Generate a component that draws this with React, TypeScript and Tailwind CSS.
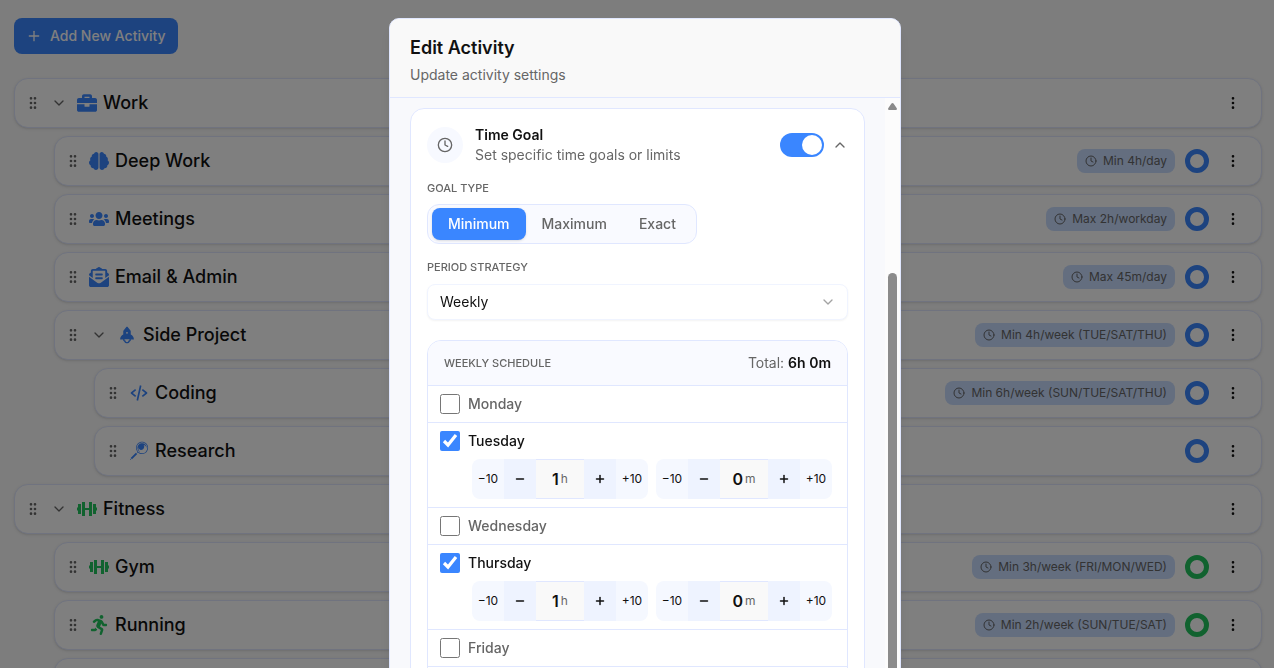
import { useState } from "react";
import type { ComponentType } from "react";
import { AiFillRocket } from "react-icons/ai";
import { BiCodeAlt } from "react-icons/bi";
import { FaBrain, FaBriefcase, FaEnvelopeOpenText, FaRunning, FaUsers } from "react-icons/fa";
import { GiMagnifyingGlass } from "react-icons/gi";
import { ChevronDown, ChevronUp, Clock, EllipsisVertical, GripVertical, Minus, Plus } from "lucide-react";

type Activity = {
  name: string;
  icon?: ComponentType<{ className?: string }>;
  level: number;
  color: "blue" | "green";
  group?: boolean;
  ring?: boolean;
  goal?: string;
};

const Barbell = ({ className }: { className?: string }) => (
  <svg viewBox="0 0 20 20" fill="currentColor" className={className}>
    <path d="M0 8.5h1V5h3v10H1v-3.5H0zM5 3h3v6h4V3h3v14h-3v-6H8v6H5zM16 5h3v3.5h1v3h-1V15h-3z" />
  </svg>
);

const activities: Activity[] = [
  { name: "Work", icon: FaBriefcase, level: 0, color: "blue", group: true },
  { name: "Deep Work", icon: FaBrain, level: 1, color: "blue", ring: true, goal: "Min 4h/day" },
  { name: "Meetings", icon: FaUsers, level: 1, color: "blue", ring: true, goal: "Max 2h/workday" },
  { name: "Email & Admin", icon: FaEnvelopeOpenText, level: 1, color: "blue", ring: true, goal: "Max 45m/day" },
  { name: "Side Project", icon: AiFillRocket, level: 1, color: "blue", group: true, ring: true, goal: "Min 4h/week (TUE/SAT/THU)" },
  { name: "Coding", icon: BiCodeAlt, level: 2, color: "blue", ring: true, goal: "Min 6h/week (SUN/TUE/SAT/THU)" },
  { name: "Research", icon: GiMagnifyingGlass, level: 2, color: "blue", ring: true },
  { name: "Fitness", icon: Barbell, level: 0, color: "green", group: true },
  { name: "Gym", icon: Barbell, level: 1, color: "green", ring: true, goal: "Min 3h/week (FRI/MON/WED)" },
  { name: "Running", icon: FaRunning, level: 1, color: "green", ring: true, goal: "Min 2h/week (SUN/TUE/SAT)" },
  { name: "", level: 1, color: "green" },
];

const indents = ["", "ml-10", "ml-20"];

const iconColors = {
  blue: "text-[#3a86ff]",
  green: "text-[#22c55e]",
};

const ringColors = {
  blue: "border-[#3a86ff]",
  green: "border-[#22c55e]",
};

const goalTypes = ["Minimum", "Maximum", "Exact"];

const schedule = [
  { day: "Monday", hours: 0, minutes: 0, active: false },
  { day: "Tuesday", hours: 1, minutes: 0, active: true },
  { day: "Wednesday", hours: 0, minutes: 0, active: false },
  { day: "Thursday", hours: 1, minutes: 0, active: true },
  { day: "Friday", hours: 0, minutes: 0, active: false },
];

const ActivityRow = ({ activity }: { activity: Activity }) => {
  const Icon = activity.icon;
  return (
    <li
      className={`flex h-[50px] items-center gap-2 rounded-[14px] border border-[#e0e7ff] bg-white pl-[10px] pr-[14px] shadow-sm ${indents[activity.level]}`}
    >
      <GripVertical className="size-4 shrink-0 text-[#666666]" />
      {activity.group && (
        <button type="button" aria-label={`Collapse ${activity.name}`} className="p-0.5 text-[#666666]">
          <ChevronDown className="size-4" />
        </button>
      )}
      <div className="flex flex-1 items-center gap-1.5">
        {Icon && <Icon className={`size-5 shrink-0 ${iconColors[activity.color]}`} />}
        <span className="text-lg font-medium text-[#111111]">{activity.name}</span>
      </div>
      {activity.goal && (
        <span className="flex h-6 items-center gap-1.5 rounded-lg bg-[#c8dcff] px-2 text-xs text-[#666666]">
          <Clock className="size-3" />
          {activity.goal}
        </span>
      )}
      {activity.ring && (
        <span className="flex w-7 justify-center">
          <span className={`size-6 rounded-full border-[5px] ${ringColors[activity.color]}`} />
        </span>
      )}
      <button type="button" aria-label="Activity menu" className="flex size-7 items-center justify-center text-[#111111]">
        <EllipsisVertical className="size-4" />
      </button>
    </li>
  );
};

const Stepper = ({ value, unit }: { value: number; unit: string }) => {
  const [amount, setAmount] = useState(value);
  const change = (step: number) => setAmount(Math.max(0, amount + step));

  return (
    <div className="flex h-10 overflow-hidden rounded-lg text-[#111111]">
      <button type="button" onClick={() => change(-10)} className="w-8 bg-[#f5f8ff] text-xs">
        −10
      </button>
      <button type="button" aria-label="Decrease" onClick={() => change(-1)} className="flex w-8 items-center justify-center bg-[#eef3ff]">
        <Minus className="size-3" strokeWidth={3} />
      </button>
      <div className="flex w-12 items-center justify-center gap-0.5 border-y border-[#e0e7ff] bg-[#f9f9f9]">
        <span className="font-semibold">{amount}</span>
        <span className="text-xs text-[#666666]">{unit}</span>
      </div>
      <button type="button" aria-label="Increase" onClick={() => change(1)} className="flex w-8 items-center justify-center bg-[#eef3ff]">
        <Plus className="size-3" strokeWidth={3} />
      </button>
      <button type="button" onClick={() => change(10)} className="w-8 bg-[#f5f8ff] text-xs">
        +10
      </button>
    </div>
  );
};

const WeeklySchedule = () => {
  const [days, setDays] = useState(schedule);

  const toggle = (day: string) =>
    setDays(days.map((d) => (d.day === day ? { ...d, active: !d.active } : d)));

  return (
    <div className="mt-5 overflow-hidden rounded-[14px] border border-[#e0e7ff]">
      <div className="flex h-11 items-center justify-between bg-[#f9faff] px-4">
        <h4 className="text-[11px] font-medium text-[#666666]">WEEKLY SCHEDULE</h4>
        <p className="text-sm text-[#666666]">
          Total: <span className="font-semibold text-[#111111]">6h 0m</span>
        </p>
      </div>
      {days.map((d) => (
        <div key={d.day} className="border-t border-[#e0e7ff] px-3 py-2">
          <label className={`flex items-center gap-2 text-sm font-medium ${d.active ? "text-[#111111]" : "text-[#666666]"}`}>
            <input type="checkbox" checked={d.active} onChange={() => toggle(d.day)} className="size-5 accent-[#3a86ff]" />
            {d.day}
          </label>
          {d.active && (
            <div className="mt-2 flex gap-2 pl-8">
              <Stepper value={d.hours} unit="h" />
              <Stepper value={d.minutes} unit="m" />
            </div>
          )}
        </div>
      ))}
      <div className="h-9 border-t border-[#e0e7ff]" />
    </div>
  );
};

const TimeGoal = () => {
  const [goalType, setGoalType] = useState("Minimum");
  const [enabled, setEnabled] = useState(true);

  return (
    <section className="rounded-[14px] border border-[#e0e7ff] bg-white p-4">
      <div className="flex items-center gap-3">
        <div className="flex size-9 items-center justify-center rounded-full bg-[#f7f9ff] text-[#666666]">
          <Clock className="size-4" />
        </div>
        <div className="flex-1 text-sm">
          <h3 className="font-semibold text-[#111111]">Time Goal</h3>
          <p className="text-[#666666]">Set specific time goals or limits</p>
        </div>
        <div className="flex items-center gap-2">
          <button
            type="button"
            role="switch"
            aria-checked={enabled}
            aria-label="Time Goal"
            onClick={() => setEnabled(!enabled)}
            className={`flex h-6 w-11 items-center rounded-full px-0.5 ${enabled ? "justify-end bg-[#3a86ff]" : "bg-[#e0e7ff]"}`}
          >
            <span className="size-5 rounded-full bg-white" />
          </button>
          <button type="button" aria-label="Collapse time goal" className="text-[#666666]">
            <ChevronUp className="size-4" />
          </button>
        </div>
      </div>

      <h4 className="mt-[15px] text-[11px] leading-4 font-medium text-[#666666]">GOAL TYPE</h4>
      <div className="mt-2 inline-flex h-10 items-center rounded-xl border border-[#e0e7ff] bg-[#f9faff] px-1 align-top">
        {goalTypes.map((type) => (
          <button
            key={type}
            type="button"
            onClick={() => setGoalType(type)}
            className={`h-8 rounded-lg px-4 text-sm font-medium ${goalType === type ? "bg-[#3a86ff] text-white shadow-sm" : "text-[#666666]"}`}
          >
            {type}
          </button>
        ))}
      </div>

      <label htmlFor="period" className="mt-[15px] block text-[11px] leading-4 font-medium text-[#666666]">
        PERIOD STRATEGY
      </label>
      <div className="mt-[9px] grid items-center">
        <select
          id="period"
          className="col-start-1 row-start-1 h-9 w-full appearance-none rounded-lg border border-[#f0f4ff] bg-white px-3 text-sm text-[#111111] shadow-xs"
        >
          <option>Weekly</option>
        </select>
        <ChevronDown className="pointer-events-none col-start-1 row-start-1 mr-3 size-4 justify-self-end text-[#a3a3a3]" />
      </div>

      <WeeklySchedule />
    </section>
  );
};

const EditDialog = () => (
  <div className="fixed inset-0 flex justify-center overflow-hidden bg-black/50 pt-[18px] pl-4">
    <div
      role="dialog"
      aria-labelledby="dialog-title"
      className="flex h-screen w-full max-w-lg flex-col overflow-hidden rounded-[10px] border border-[#e0e7ff] bg-[#f8f9fc] shadow-lg"
    >
      <header className="border-b border-[#e0e7ff] bg-[#f9f9f9] px-5 pt-[17px] pb-3">
        <h2 id="dialog-title" className="text-lg leading-6 font-semibold text-[#111111]">
          Edit Activity
        </h2>
        <p className="mt-[5px] text-sm text-[#666666]">Update activity settings</p>
      </header>
      <div className="flex min-h-0 flex-1">
        <div className="flex-1 overflow-hidden px-5 pt-[10px]">
          <TimeGoal />
        </div>
        <div className="flex w-[15px] flex-col items-center bg-[#fcfcfc] pt-[5px]">
          <svg viewBox="0 0 9 7" className="h-[7px] w-[9px] fill-[#8b8b8b]">
            <path d="M4.5 0Q5.2 0 5.7.8L8.8 5.2Q9.2 7 8 7H1Q-.2 7 .2 5.2L3.3.8Q3.8 0 4.5 0Z" />
          </svg>
          <div className="mt-[163px] w-[9px] flex-1 rounded-t-full bg-[#8b8b8b]" />
        </div>
      </div>
    </div>
  </div>
);

export default function App() {
  return (
    <div className="h-screen overflow-hidden bg-[#fafafa] font-[Inter,'Liberation_Sans',sans-serif]">
      <main className="pt-[18px] pr-3 pl-[14px]">
        <button type="button" className="flex h-9 items-center gap-2 rounded-lg bg-[#3a86ff] px-3 text-sm font-medium text-white">
          <Plus className="size-4" />
          Add New Activity
        </button>
        <ul className="mt-6 flex flex-col gap-2">
          {activities.map((activity) => (
            <ActivityRow key={activity.name} activity={activity} />
          ))}
        </ul>
      </main>
      <EditDialog />
    </div>
  );
}
